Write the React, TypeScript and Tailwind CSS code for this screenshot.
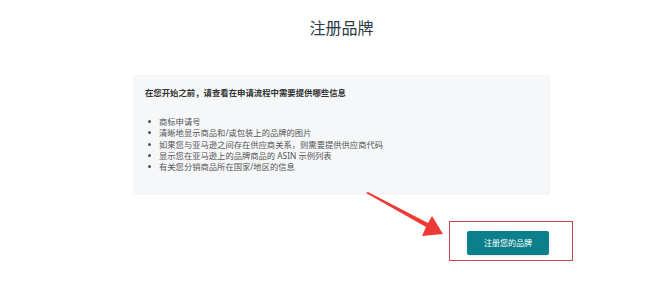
import React from "react";

const items = [
  "商标申请号",
  "清晰地显示商品和/或包装上的品牌的图片",
  "如果您与亚马逊之间存在供应商关系，则需要提供供应商代码",
  "显示您在亚马逊上的品牌商品的 ASIN 示例列表",
  "有关您分销商品所在国家/地区的信息",
];

export default function App() {
  return (
    <div
      className="relative w-[665px] h-[304px] bg-white overflow-hidden"
      style={{ fontFamily: '"Noto Sans", "Noto Sans CJK SC", sans-serif' }}
    >
      <div className="ml-[133px] w-[417px] flex flex-col">
        <h1 className="pt-[16px] text-center text-[16px] leading-[24px] text-[#2b3a46] font-normal">
          注册品牌
        </h1>
        <div className="mt-[35px] bg-[#f5f7f9] pl-[12px] pt-[12px] pb-[23px]">
          <p className="text-[8.4px] leading-[12px] font-bold text-[#333333]">
            在您开始之前，请查看在申请流程中需要提供哪些信息
          </p>
          <ul className="mt-[17px] flex flex-col">
            {items.map((t) => (
              <li key={t} className="flex items-center text-[8.3px] leading-[11.3px] text-[#555555]">
                <span className="w-[3px] h-[3px] rounded-full bg-[#555555] ml-[3px] mr-[8px]" />
                <span>{t}</span>
              </li>
            ))}
          </ul>
        </div>
        <div className="mt-[33px] flex justify-end pr-[1px]">
          <div className="relative">
            <button className="w-[82px] h-[24px] bg-[#0b7f8b] text-white text-[8px] rounded-[2px] shadow-sm">
              注册您的品牌
            </button>
            <div className="absolute left-[-18px] top-[-7px] right-[-24px] bottom-[-6px] border-[1.5px] border-[#c8474b] pointer-events-none" />
          </div>
        </div>
      </div>
      <svg
        className="absolute left-0 top-0 pointer-events-none"
        width="665"
        height="304"
        viewBox="0 0 665 304"
      >
        <polygon
          points="366,193 368,192 428,223 432,216 443,234 422,236 426,227"
          fill="#ee3a35"
        />
      </svg>
    </div>
  );
}
